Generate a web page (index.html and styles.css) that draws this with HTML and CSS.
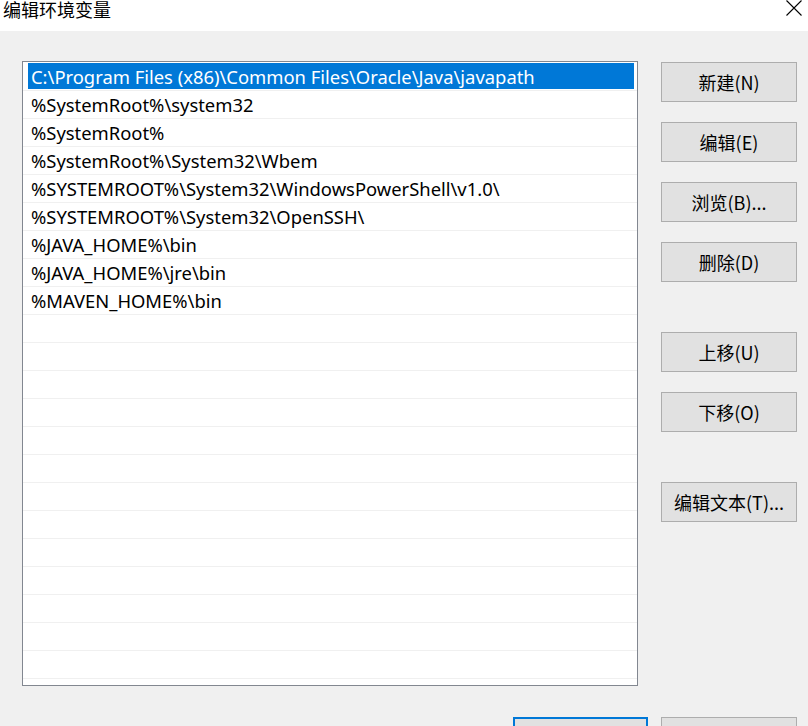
FILE: index.html
```html
<!DOCTYPE html>
<html lang="zh-CN">
<head>
<meta charset="utf-8">
<title>编辑环境变量</title>
<link rel="stylesheet" href="styles.css">
</head>
<body>
<div class="dialog">
  <div class="titlebar">
    <span class="title">编辑环境变量</span>
    <svg class="close" width="16" height="16" viewBox="0 0 16 16"><path d="M0.5 0.5 L15.5 15.5 M15.5 0.5 L0.5 15.5" stroke="#000" stroke-width="1.1" fill="none"/></svg>
  </div>
  <div class="content">
    <div class="listbox">
      <div class="row selected"><span class="sel">C:\Program Files (x86)\Common Files\Oracle\Java\javapath</span></div>
      <div class="row"><span class="txt">%SystemRoot%\system32</span></div>
      <div class="row"><span class="txt">%SystemRoot%</span></div>
      <div class="row"><span class="txt">%SystemRoot%\System32\Wbem</span></div>
      <div class="row"><span class="txt">%SYSTEMROOT%\System32\WindowsPowerShell\v1.0\</span></div>
      <div class="row"><span class="txt">%SYSTEMROOT%\System32\OpenSSH\</span></div>
      <div class="row"><span class="txt">%JAVA_HOME%\bin</span></div>
      <div class="row"><span class="txt">%JAVA_HOME%\jre\bin</span></div>
      <div class="row"><span class="txt">%MAVEN_HOME%\bin</span></div>
      <div class="row"></div><div class="row"></div><div class="row"></div>
      <div class="row"></div><div class="row"></div><div class="row"></div>
      <div class="row"></div><div class="row"></div><div class="row"></div>
      <div class="row"></div><div class="row"></div><div class="row"></div>
      <div class="row"></div><div class="row"></div>
    </div>
    <div class="buttons">
      <button class="btn">新建(N)</button>
      <button class="btn">编辑(E)</button>
      <button class="btn">浏览(B)...</button>
      <button class="btn">删除(D)</button>
      <button class="btn gap-big">上移(U)</button>
      <button class="btn">下移(O)</button>
      <button class="btn gap-big">编辑文本(T)...</button>
    </div>
  </div>
  <div class="footer">
    <button class="btn default"></button>
    <button class="btn"></button>
  </div>
</div>
</body>
</html>
```
FILE: styles.css
```css
html, body {
  margin: 0;
  padding: 0;
}
body {
  width: 808px;
  height: 726px;
  overflow: hidden;
  background: #f0f0f0;
  font-family: "Noto Sans", "Noto Sans CJK SC", sans-serif;
  color: #000;
}
.dialog {
  display: flex;
  flex-direction: column;
  height: 726px;
}
.titlebar {
  height: 31px;
  background: #fff;
  display: flex;
  align-items: flex-start;
  justify-content: space-between;
  flex: none;
}
.title {
  font-family: "Noto Sans CJK SC", sans-serif;
  font-size: 18px;
  line-height: 18px;
  margin: 0 0 0 3px;
}
.close {
  margin: 0 6px 0 0;
  display: block;
}
.content {
  display: flex;
  align-items: flex-start;
  padding: 30px 0 0 22px;
  gap: 23px;
  flex: none;
}
.listbox {
  width: 614px;
  height: 622px;
  border: 1px solid #828790;
  background: #fff;
  overflow: hidden;
  padding-top: 1px;
  box-sizing: content-box;
}
.row {
  height: 27px;
  border-bottom: 1px solid #f0f0f0;
  display: flex;
  align-items: stretch;
  font-size: 18.4px;
  line-height: 28px;
  white-space: nowrap;
}
.txt {
  padding-left: 8px;
}
.sel {
  flex: 1;
  background: #0078d7;
  color: #fff;
  margin: 0 3px 1px 5px;
  padding-left: 3px;
  line-height: 27px;
}
.buttons {
  display: flex;
  flex-direction: column;
  gap: 20px;
  padding-top: 1px;
}
.btn {
  width: 136px;
  height: 40px;
  background: #e1e1e1;
  border: 1px solid #adadad;
  font-family: "Noto Sans CJK SC", sans-serif;
  font-size: 18px;
  color: #000;
  padding: 0;
  margin: 0;
  box-sizing: border-box;
}
.btn.gap-big {
  margin-top: 30px;
}
.footer {
  display: flex;
  justify-content: flex-end;
  gap: 13px;
  padding: 31px 11px 0 0;
}
.btn.default {
  width: 135px;
  border: 2px solid #0078d7;
}
```
